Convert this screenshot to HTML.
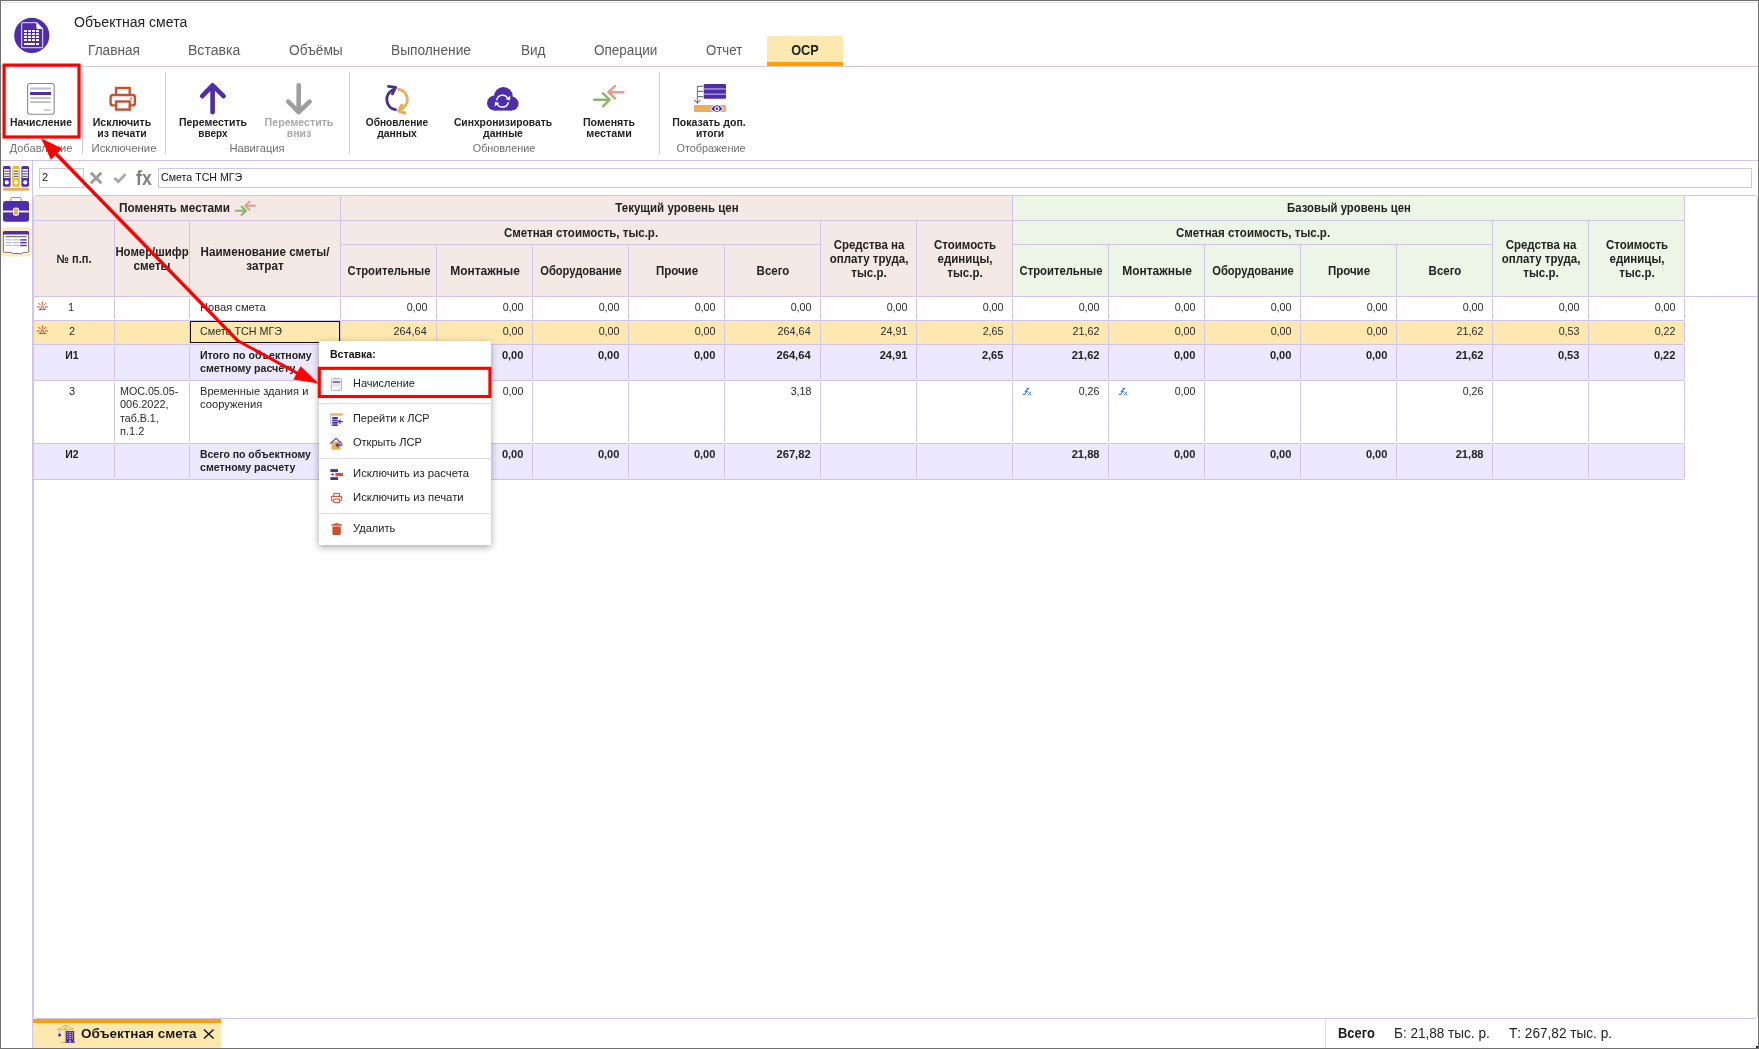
<!DOCTYPE html>
<html lang="ru"><head><meta charset="utf-8"><title>Объектная смета</title><style>
html,body{margin:0;padding:0}
body{width:1759px;height:1049px;overflow:hidden;background:#fff;position:relative;
font-family:"Liberation Sans",sans-serif}
.t{position:absolute;white-space:nowrap;display:block}
#wrap{position:absolute;left:0;top:0;width:1759px;height:1049px;will-change:transform;overflow:hidden}
svg{position:absolute;left:0;top:0}
</style></head><body><div id="wrap">
<svg width="1759" height="1049" shape-rendering="crispEdges">
<rect x="767" y="36" width="76" height="30" fill="#fde9b0"/>
<rect x="767" y="62" width="76" height="4" fill="#ffa000"/>
<rect x="1" y="66" width="1757" height="1" fill="#d0c4e9"/>
<rect x="1" y="160" width="1757" height="1" fill="#d0c4e9"/>
<rect x="82" y="72" width="1" height="82" fill="#d0c4e9"/>
<rect x="165" y="72" width="1" height="82" fill="#d0c4e9"/>
<rect x="349" y="72" width="1" height="82" fill="#d0c4e9"/>
<rect x="659" y="72" width="1" height="82" fill="#d0c4e9"/>
<rect x="32" y="161" width="1" height="887" fill="#d0c4e9"/>
<rect x="1" y="227.2" width="30.5" height="29.4" rx="3.5" fill="#fdecc0" shape-rendering="auto"/>
<rect x="39.5" y="168.5" width="44" height="19" fill="#fff" stroke="#d0c4e9"/>
<rect x="158.5" y="168.5" width="1593" height="19" fill="#fff" stroke="#d0c4e9"/>
<rect x="34" y="196" width="978" height="100" fill="#f5e9e6"/>
<rect x="1013" y="196" width="671" height="100" fill="#edf5e7"/>
<rect x="34" y="321" width="1650" height="23" fill="#fde9b0"/>
<rect x="34" y="345" width="1650" height="35" fill="#ece8fd"/>
<rect x="34" y="444" width="1650" height="35" fill="#ece8fd"/>
<rect x="33.5" y="195.5" width="1724" height="823" rx="3" fill="none" stroke="#d0c4e9" shape-rendering="auto"/>
<rect x="34" y="220" width="1651" height="1" fill="#d0c4e9"/>
<rect x="340" y="244" width="480" height="1" fill="#d0c4e9"/>
<rect x="1012" y="244" width="480" height="1" fill="#d0c4e9"/>
<rect x="34" y="296" width="1723" height="1" fill="#d0c4e9"/>
<rect x="34" y="320" width="1651" height="1" fill="#d0c4e9"/>
<rect x="34" y="344" width="1651" height="1" fill="#d0c4e9"/>
<rect x="34" y="380" width="1651" height="1" fill="#d0c4e9"/>
<rect x="34" y="443" width="1651" height="1" fill="#d0c4e9"/>
<rect x="34" y="479" width="1651" height="1" fill="#d0c4e9"/>
<rect x="114" y="221" width="1" height="75" fill="#d0c4e9"/>
<rect x="114" y="298" width="1" height="21" fill="#d0c4e9"/>
<rect x="114" y="322" width="1" height="21" fill="#d0c4e9"/>
<rect x="114" y="346" width="1" height="33" fill="#d0c4e9"/>
<rect x="114" y="382" width="1" height="60" fill="#d0c4e9"/>
<rect x="114" y="445" width="1" height="33" fill="#d0c4e9"/>
<rect x="189" y="221" width="1" height="75" fill="#d0c4e9"/>
<rect x="189" y="298" width="1" height="21" fill="#d0c4e9"/>
<rect x="189" y="322" width="1" height="21" fill="#d0c4e9"/>
<rect x="189" y="346" width="1" height="33" fill="#d0c4e9"/>
<rect x="189" y="382" width="1" height="60" fill="#d0c4e9"/>
<rect x="189" y="445" width="1" height="33" fill="#d0c4e9"/>
<rect x="340" y="196" width="1" height="100" fill="#d0c4e9"/>
<rect x="340" y="298" width="1" height="21" fill="#d0c4e9"/>
<rect x="340" y="322" width="1" height="21" fill="#d0c4e9"/>
<rect x="340" y="346" width="1" height="33" fill="#d0c4e9"/>
<rect x="340" y="382" width="1" height="60" fill="#d0c4e9"/>
<rect x="340" y="445" width="1" height="33" fill="#d0c4e9"/>
<rect x="436" y="245" width="1" height="51" fill="#d0c4e9"/>
<rect x="436" y="298" width="1" height="21" fill="#d0c4e9"/>
<rect x="436" y="322" width="1" height="21" fill="#d0c4e9"/>
<rect x="436" y="346" width="1" height="33" fill="#d0c4e9"/>
<rect x="436" y="382" width="1" height="60" fill="#d0c4e9"/>
<rect x="436" y="445" width="1" height="33" fill="#d0c4e9"/>
<rect x="532" y="245" width="1" height="51" fill="#d0c4e9"/>
<rect x="532" y="298" width="1" height="21" fill="#d0c4e9"/>
<rect x="532" y="322" width="1" height="21" fill="#d0c4e9"/>
<rect x="532" y="346" width="1" height="33" fill="#d0c4e9"/>
<rect x="532" y="382" width="1" height="60" fill="#d0c4e9"/>
<rect x="532" y="445" width="1" height="33" fill="#d0c4e9"/>
<rect x="628" y="245" width="1" height="51" fill="#d0c4e9"/>
<rect x="628" y="298" width="1" height="21" fill="#d0c4e9"/>
<rect x="628" y="322" width="1" height="21" fill="#d0c4e9"/>
<rect x="628" y="346" width="1" height="33" fill="#d0c4e9"/>
<rect x="628" y="382" width="1" height="60" fill="#d0c4e9"/>
<rect x="628" y="445" width="1" height="33" fill="#d0c4e9"/>
<rect x="724" y="245" width="1" height="51" fill="#d0c4e9"/>
<rect x="724" y="298" width="1" height="21" fill="#d0c4e9"/>
<rect x="724" y="322" width="1" height="21" fill="#d0c4e9"/>
<rect x="724" y="346" width="1" height="33" fill="#d0c4e9"/>
<rect x="724" y="382" width="1" height="60" fill="#d0c4e9"/>
<rect x="724" y="445" width="1" height="33" fill="#d0c4e9"/>
<rect x="820" y="221" width="1" height="75" fill="#d0c4e9"/>
<rect x="820" y="298" width="1" height="21" fill="#d0c4e9"/>
<rect x="820" y="322" width="1" height="21" fill="#d0c4e9"/>
<rect x="820" y="346" width="1" height="33" fill="#d0c4e9"/>
<rect x="820" y="382" width="1" height="60" fill="#d0c4e9"/>
<rect x="820" y="445" width="1" height="33" fill="#d0c4e9"/>
<rect x="916" y="221" width="1" height="75" fill="#d0c4e9"/>
<rect x="916" y="298" width="1" height="21" fill="#d0c4e9"/>
<rect x="916" y="322" width="1" height="21" fill="#d0c4e9"/>
<rect x="916" y="346" width="1" height="33" fill="#d0c4e9"/>
<rect x="916" y="382" width="1" height="60" fill="#d0c4e9"/>
<rect x="916" y="445" width="1" height="33" fill="#d0c4e9"/>
<rect x="1012" y="196" width="1" height="100" fill="#d0c4e9"/>
<rect x="1012" y="298" width="1" height="21" fill="#d0c4e9"/>
<rect x="1012" y="322" width="1" height="21" fill="#d0c4e9"/>
<rect x="1012" y="346" width="1" height="33" fill="#d0c4e9"/>
<rect x="1012" y="382" width="1" height="60" fill="#d0c4e9"/>
<rect x="1012" y="445" width="1" height="33" fill="#d0c4e9"/>
<rect x="1108" y="245" width="1" height="51" fill="#d0c4e9"/>
<rect x="1108" y="298" width="1" height="21" fill="#d0c4e9"/>
<rect x="1108" y="322" width="1" height="21" fill="#d0c4e9"/>
<rect x="1108" y="346" width="1" height="33" fill="#d0c4e9"/>
<rect x="1108" y="382" width="1" height="60" fill="#d0c4e9"/>
<rect x="1108" y="445" width="1" height="33" fill="#d0c4e9"/>
<rect x="1204" y="245" width="1" height="51" fill="#d0c4e9"/>
<rect x="1204" y="298" width="1" height="21" fill="#d0c4e9"/>
<rect x="1204" y="322" width="1" height="21" fill="#d0c4e9"/>
<rect x="1204" y="346" width="1" height="33" fill="#d0c4e9"/>
<rect x="1204" y="382" width="1" height="60" fill="#d0c4e9"/>
<rect x="1204" y="445" width="1" height="33" fill="#d0c4e9"/>
<rect x="1300" y="245" width="1" height="51" fill="#d0c4e9"/>
<rect x="1300" y="298" width="1" height="21" fill="#d0c4e9"/>
<rect x="1300" y="322" width="1" height="21" fill="#d0c4e9"/>
<rect x="1300" y="346" width="1" height="33" fill="#d0c4e9"/>
<rect x="1300" y="382" width="1" height="60" fill="#d0c4e9"/>
<rect x="1300" y="445" width="1" height="33" fill="#d0c4e9"/>
<rect x="1396" y="245" width="1" height="51" fill="#d0c4e9"/>
<rect x="1396" y="298" width="1" height="21" fill="#d0c4e9"/>
<rect x="1396" y="322" width="1" height="21" fill="#d0c4e9"/>
<rect x="1396" y="346" width="1" height="33" fill="#d0c4e9"/>
<rect x="1396" y="382" width="1" height="60" fill="#d0c4e9"/>
<rect x="1396" y="445" width="1" height="33" fill="#d0c4e9"/>
<rect x="1492" y="221" width="1" height="75" fill="#d0c4e9"/>
<rect x="1492" y="298" width="1" height="21" fill="#d0c4e9"/>
<rect x="1492" y="322" width="1" height="21" fill="#d0c4e9"/>
<rect x="1492" y="346" width="1" height="33" fill="#d0c4e9"/>
<rect x="1492" y="382" width="1" height="60" fill="#d0c4e9"/>
<rect x="1492" y="445" width="1" height="33" fill="#d0c4e9"/>
<rect x="1588" y="221" width="1" height="75" fill="#d0c4e9"/>
<rect x="1588" y="298" width="1" height="21" fill="#d0c4e9"/>
<rect x="1588" y="322" width="1" height="21" fill="#d0c4e9"/>
<rect x="1588" y="346" width="1" height="33" fill="#d0c4e9"/>
<rect x="1588" y="382" width="1" height="60" fill="#d0c4e9"/>
<rect x="1588" y="445" width="1" height="33" fill="#d0c4e9"/>
<rect x="1684" y="196" width="1" height="100" fill="#d0c4e9"/>
<rect x="1684" y="298" width="1" height="21" fill="#d0c4e9"/>
<rect x="1684" y="322" width="1" height="21" fill="#d0c4e9"/>
<rect x="1684" y="346" width="1" height="33" fill="#d0c4e9"/>
<rect x="1684" y="382" width="1" height="60" fill="#d0c4e9"/>
<rect x="1684" y="445" width="1" height="33" fill="#d0c4e9"/>
<rect x="33" y="1019" width="188" height="4" fill="#ffa000"/>
<rect x="33" y="1023" width="188" height="25" fill="#fde9b0"/>
<rect x="1325" y="1019" width="1" height="29" fill="#dddddd"/>
<rect x="2" y="2" width="1756" height="1" fill="#e3e5e3"/>
<rect x="1756" y="1046" width="2" height="2" fill="#1d2468"/>
<rect x="0" y="0" width="1759" height="1" fill="#707070"/>
<rect x="0" y="1048" width="1759" height="1" fill="#707070"/>
<rect x="0" y="0" width="1" height="1049" fill="#707070"/>
<rect x="1758" y="0" width="1" height="1049" fill="#707070"/>
</svg>
<svg width="1759" height="1049">
<circle cx="31.8" cy="35.4" r="17.6" fill="#4f2daa"/><path d="M23 22.6 H36.6 L42.6 28.8 V46.4 Q42.6 47.6 41.4 47.6 H23 Q21.6 47.6 21.6 46.4 V24 Q21.6 22.6 23 22.6 Z" fill="#4f2daa" stroke="#cbbdea" stroke-width="1.3"/><path d="M36.4 22.4 L43 29 H37.6 Q36.4 29 36.4 27.8 Z" fill="#fff"/><rect x="24" y="30" width="3" height="2" rx="0.5" fill="#fff"/><rect x="28" y="30" width="3" height="2" rx="0.5" fill="#fff"/><rect x="32" y="30" width="3" height="2" rx="0.5" fill="#fff"/><rect x="36" y="30" width="3" height="2" rx="0.5" fill="#fff"/><rect x="24" y="33" width="3" height="2" rx="0.5" fill="#fff"/><rect x="28" y="33" width="3" height="2" rx="0.5" fill="#fff"/><rect x="32" y="33" width="3" height="2" rx="0.5" fill="#fff"/><rect x="36" y="33" width="3" height="2" rx="0.5" fill="#fff"/><rect x="24" y="36" width="3" height="2" rx="0.5" fill="#fff"/><rect x="28" y="36" width="3" height="2" rx="0.5" fill="#fff"/><rect x="32" y="36" width="3" height="2" rx="0.5" fill="#fff"/><rect x="36" y="36" width="3" height="2" rx="0.5" fill="#fff"/><rect x="24" y="39" width="3" height="2" rx="0.5" fill="#fff"/><rect x="28" y="39" width="3" height="2" rx="0.5" fill="#fff"/><rect x="32" y="39" width="3" height="2" rx="0.5" fill="#fff"/><rect x="36" y="39" width="3" height="2" rx="0.5" fill="#fff"/><rect x="24" y="43" width="11" height="2" rx="0.5" fill="#fff"/><rect x="36" y="43" width="3" height="2" rx="0.5" fill="#fff"/>
<rect x="27.6" y="83.5" width="26.6" height="30.8" rx="2.2" fill="#fff" stroke="#8a8a8a" stroke-width="1.1"/><rect x="30" y="87.6" width="21" height="1.8" rx=".8" fill="#bdbdbd"/><rect x="30" y="92" width="21" height="3" rx=".6" fill="#4f2daa"/><rect x="30" y="97.2" width="21" height="1.8" rx=".8" fill="#bdbdbd"/><rect x="30" y="101.2" width="21" height="1.8" rx=".8" fill="#bdbdbd"/><rect x="44" y="109.3" width="7" height="1.5" rx=".7" fill="#bdbdbd"/>
<g transform="translate(109.5 86.9) scale(1.0)" fill="#fff" stroke="#cb4f2f" stroke-width="2.4"><rect x="6.6" y="1.1" width="13.6" height="7.5"/><rect x="1.1" y="8.1" width="24.3" height="10.4" rx="2.2"/><rect x="6.6" y="14.6" width="13.6" height="8.1"/><circle cx="21.6" cy="11.6" r="0.9" fill="#cb4f2f" stroke="none"/></g>
<path d="M212.6 112.2 V85.2 M202.2 96.2 L212.6 85.4 L223.6 96.2" fill="none" stroke="#4f2daa" stroke-width="4.6" stroke-linecap="round" stroke-linejoin="round"/><path d="M298.7 85.2 V112.2 M288.3 101.6 L298.7 112.2 L309.6 101.6" fill="none" stroke="#9e9e9e" stroke-width="4.6" stroke-linecap="round" stroke-linejoin="round"/>
<path d="M395.4 109.6 A10.4 10.4 0 0 1 393.6 89.6" fill="none" stroke="#43308f" stroke-width="2.9" stroke-linecap="round"/><path d="M388.6 86.4 L395.6 87.4 L392.4 93.8" fill="none" stroke="#43308f" stroke-width="2.9" stroke-linecap="round" stroke-linejoin="round"/><path d="M398.6 89.2 A10.4 10.4 0 0 1 400.6 109.2" fill="none" stroke="#e8ae5c" stroke-width="2.9" stroke-linecap="round"/><path d="M401.8 105 L398.6 111 L405 113" fill="none" stroke="#e8ae5c" stroke-width="2.9" stroke-linecap="round" stroke-linejoin="round"/>
<g fill="#4f2daa"><circle cx="503.4" cy="96.4" r="9.4"/><circle cx="494.6" cy="103" r="7.6"/><circle cx="511.6" cy="103.6" r="7"/><rect x="494.6" y="100" width="17" height="10.6"/></g><g fill="none" stroke="#fff" stroke-width="1.5" stroke-linecap="round"><path d="M496.8 99.7 A5.9 5.9 0 0 1 507.85 98.7"/><path d="M508.2 102.7 A5.9 5.9 0 0 1 497.15 103.7"/></g><path d="M510.3 95.8 L510 100.6 L505.6 99.3 Z" fill="#fff"/><path d="M494.7 106.6 L495 101.8 L499.4 103.1 Z" fill="#fff"/>
<g transform="translate(593 85.3) scale(1.0)" fill="none" stroke-width="2.5" stroke-linecap="round" stroke-linejoin="round"><path d="M1.2 14.4 H16.4 M10 8 L16.6 14.4 L10 21" stroke="#8ab570"/><path d="M30.4 6.9 H15.6 M22 0.8 L15.4 6.9 L22 13.2" stroke="#e59d8c"/></g>
<rect x="703.8" y="84" width="22.2" height="14.8" rx="1.2" fill="#4f2daa"/><rect x="703.8" y="88.4" width="22.2" height="1.1" fill="#c4b7ea"/><rect x="703.8" y="93.6" width="22.2" height="1.1" fill="#c4b7ea"/><rect x="694" y="105" width="32" height="6.9" rx="0.8" fill="#e8ae5c"/><path d="M703.4 86.4 H697.4 V103 M697.4 91.4 H703.4 M697.4 96.6 H703.4 M694.4 99.8 L697.4 103.2 L700.4 99.8" fill="none" stroke="#7a7a7a" stroke-width="1.1"/><path d="M709.8 108.7 Q716.9 100.2 724 108.7 Q716.9 117.2 709.8 108.7 Z" fill="#fff"/><path d="M711.2 108.7 Q716.9 102 722.6 108.7 Q716.9 115.4 711.2 108.7 Z" fill="#4f2daa"/><circle cx="716.9" cy="108.7" r="2.5" fill="#fff"/><circle cx="716.9" cy="108.7" r="1.3" fill="#4f2daa"/>
<rect x="3" y="166" width="7.6" height="20.8" rx="1.6" fill="#4f2daa"/><rect x="4.1" y="169" width="5.4" height="9" rx=".6" fill="#fff"/><rect x="4.4" y="170.6" width="4.8" height="1.3" fill="#666"/><rect x="4.4" y="173.2" width="4.8" height="1.3" fill="#666"/><rect x="4.4" y="175.8" width="4.8" height="1.3" fill="#666"/><circle cx="6.8" cy="182.4" r="2.1" fill="#fff"/><rect x="12.2" y="166" width="7.6" height="20.8" rx="1.6" fill="#e9be28"/><rect x="13.299999999999999" y="169" width="5.4" height="9" rx=".6" fill="#fff"/><rect x="13.6" y="170.6" width="4.8" height="1.3" fill="#666"/><rect x="13.6" y="173.2" width="4.8" height="1.3" fill="#666"/><rect x="13.6" y="175.8" width="4.8" height="1.3" fill="#666"/><circle cx="16.0" cy="182.4" r="2.1" fill="#fff"/><rect x="21.4" y="166" width="7.6" height="20.8" rx="1.6" fill="#4f2daa"/><rect x="22.5" y="169" width="5.4" height="9" rx=".6" fill="#fff"/><rect x="22.799999999999997" y="170.6" width="4.8" height="1.3" fill="#666"/><rect x="22.799999999999997" y="173.2" width="4.8" height="1.3" fill="#666"/><rect x="22.799999999999997" y="175.8" width="4.8" height="1.3" fill="#666"/><circle cx="25.2" cy="182.4" r="2.1" fill="#fff"/><rect x="3" y="187.8" width="26" height="3" rx=".6" fill="#e8ae5c"/><path d="M10.8 201 V198.6 Q10.8 197.6 11.8 197.6 H20.2 Q21.2 197.6 21.2 198.6 V201" fill="none" stroke="#8a8a8a" stroke-width="1"/><rect x="3" y="201" width="26" height="20.8" rx="2.4" fill="#4f2daa"/><rect x="3" y="210.6" width="26" height="1.8" fill="#fff"/><rect x="13.6" y="208.2" width="4.8" height="7" rx=".6" fill="#e8ae5c" stroke="#fff" stroke-width="1"/><path d="M3.4 232 H28.6 V251 Q28.6 252.4 27.2 252.4 H23 L22 253.6 H12.4 L11.4 252.4 H4.8 Q3.4 252.4 3.4 251 Z" fill="#fff" stroke="#777" stroke-width="1"/><path d="M4.6 231 H27.4 Q29 231 29 232.6 V234.6 H3 V232.6 Q3 231 4.6 231 Z" fill="#4f2daa"/><rect x="5.4" y="236" width="21.2" height="1.2" fill="#777"/><rect x="5.4" y="239.2" width="6.4" height="1.2" fill="#bbb"/><rect x="13" y="239.2" width="6" height="1.2" fill="#bbb"/><rect x="20.2" y="239.2" width="6.4" height="1.4" fill="#4f2daa"/><rect x="5.4" y="242" width="6.4" height="1.2" fill="#bbb"/><rect x="13" y="242" width="6" height="1.2" fill="#bbb"/><rect x="20.2" y="242" width="6.4" height="1.4" fill="#4f2daa"/><rect x="5.4" y="244.8" width="6.4" height="1.2" fill="#bbb"/><rect x="13" y="244.8" width="6" height="1.2" fill="#bbb"/><rect x="20.2" y="244.8" width="6.4" height="1.4" fill="#4f2daa"/>
<path d="M90.9 172.8 L101.3 183.2 M101.3 172.8 L90.9 183.2" fill="none" stroke="#9a9a9a" stroke-width="2.8"/><path d="M114.4 178 L118.4 181.6 L125.4 174.2" fill="none" stroke="#a6a6a6" stroke-width="2.7"/>
<g transform="translate(235 201.2) scale(0.66)" fill="none" stroke-width="3.0" stroke-linecap="round" stroke-linejoin="round"><path d="M1.2 14.4 H16.4 M10 8 L16.6 14.4 L10 21" stroke="#8ab570"/><path d="M30.4 6.9 H15.6 M22 0.8 L15.4 6.9 L22 13.2" stroke="#e59d8c"/></g>
<g fill="none" stroke="#d9452b" stroke-width="1" stroke-linecap="round"><path d="M39.199999999999996 309.6 H45.6 M40.199999999999996 309.20000000000005 L42.4 305.6 L44.6 309.20000000000005"/><path d="M42.4 304.40000000000003 V302.0"/><path d="M40.4 305.0 L38.8 303.20000000000005 M44.4 305.0 L46.0 303.20000000000005"/><path d="M39.4 307.0 H37.199999999999996 M45.4 307.0 H47.6"/></g>
<g fill="none" stroke="#d9452b" stroke-width="1" stroke-linecap="round"><path d="M39.199999999999996 333.6 H45.6 M40.199999999999996 333.20000000000005 L42.4 329.6 L44.6 333.20000000000005"/><path d="M42.4 328.40000000000003 V326.0"/><path d="M40.4 329.0 L38.8 327.20000000000005 M44.4 329.0 L46.0 327.20000000000005"/><path d="M39.4 331.0 H37.199999999999996 M45.4 331.0 H47.6"/></g>
<path d="M57.4 1029.4 H73.8 M57.6 1029.2 L66 1025.2 L73.6 1029.2 M61.6 1042.4 H66.4" fill="none" stroke="#e8b255" stroke-width="1"/><rect x="64.7" y="1025.4" width="1.6" height="17" fill="#e8b255"/><rect x="58.9" y="1030.6" width="1.3" height="3" fill="#b9a7e6"/><circle cx="59.6" cy="1035" r="1.5" fill="#4f2daa"/><rect x="66" y="1031" width="8.2" height="11.4" fill="#4f2daa"/><rect x="65.2" y="1041.8" width="9.8" height="0.9" fill="#4f2daa"/><rect x="67.2" y="1032.3" width="1" height=".9" fill="#e6c88c"/><rect x="69" y="1032.3" width="2.2" height=".9" fill="#cbb9e9"/><rect x="72" y="1032.3" width="1" height=".9" fill="#e6c88c"/><rect x="67.2" y="1034.2" width="1" height=".9" fill="#e6c88c"/><rect x="69" y="1034.2" width="2.2" height=".9" fill="#cbb9e9"/><rect x="72" y="1034.2" width="1" height=".9" fill="#e6c88c"/><rect x="67.2" y="1036.1" width="1" height=".9" fill="#e6c88c"/><rect x="69" y="1036.1" width="2.2" height=".9" fill="#cbb9e9"/><rect x="72" y="1036.1" width="1" height=".9" fill="#e6c88c"/><rect x="67.2" y="1038" width="1" height=".9" fill="#e6c88c"/><rect x="69" y="1038" width="2.2" height=".9" fill="#cbb9e9"/><rect x="72" y="1038" width="1" height=".9" fill="#e6c88c"/><rect x="69.2" y="1040.4" width="1.8" height="1.8" rx=".6" fill="#fdf3d6"/><path d="M204 1029.6 L213.6 1038.6 M213.6 1029.6 L204 1038.6" fill="none" stroke="#111" stroke-width="1.4"/>
<g transform="translate(0 0)" fill="none" stroke="#2f62f5" stroke-linecap="round"><path d="M1023.2 394.3 Q1025.3 394.9 1025.9 392.4 L1026.7 389.8 Q1027.3 387.7 1028.7 388.7" stroke-width="1.05"/><path d="M1025 391.3 H1027.8" stroke-width="0.9"/><path d="M1028.5 392.4 L1030.8 394.8 M1031 392.3 L1028.4 394.8" stroke-width="0.85"/></g>
<g transform="translate(96 0)" fill="none" stroke="#2f62f5" stroke-linecap="round"><path d="M1023.2 394.3 Q1025.3 394.9 1025.9 392.4 L1026.7 389.8 Q1027.3 387.7 1028.7 388.7" stroke-width="1.05"/><path d="M1025 391.3 H1027.8" stroke-width="0.9"/><path d="M1028.5 392.4 L1030.8 394.8 M1031 392.3 L1028.4 394.8" stroke-width="0.85"/></g>
</svg>
<span class="t" style="top:13.40px;font-size:14px;line-height:18px;color:#222;left:74.25px;transform-origin:0 0;transform:scaleX(1.0053);">Объектная смета</span>
<span class="t" style="top:41.05px;font-size:14px;line-height:18px;color:#5a5a5a;left:88.00px;transform-origin:0 0;transform:scaleX(0.9757);">Главная</span>
<span class="t" style="top:41.05px;font-size:14px;line-height:18px;color:#5a5a5a;left:188.25px;transform-origin:0 0;transform:scaleX(1.0039);">Вставка</span>
<span class="t" style="top:41.05px;font-size:14px;line-height:18px;color:#5a5a5a;left:288.75px;transform-origin:0 0;transform:scaleX(0.9831);">Объёмы</span>
<span class="t" style="top:41.05px;font-size:14px;line-height:18px;color:#5a5a5a;left:390.75px;transform-origin:0 0;transform:scaleX(0.9818);">Выполнение</span>
<span class="t" style="top:41.05px;font-size:14px;line-height:18px;color:#5a5a5a;left:520.50px;transform-origin:0 0;transform:scaleX(0.9673);">Вид</span>
<span class="t" style="top:41.05px;font-size:14px;line-height:18px;color:#5a5a5a;left:594.25px;transform-origin:0 0;transform:scaleX(0.9656);">Операции</span>
<span class="t" style="top:41.05px;font-size:14px;line-height:18px;color:#5a5a5a;left:706.25px;transform-origin:0 0;transform:scaleX(0.9454);">Отчет</span>
<span class="t" style="top:41.05px;font-size:14px;line-height:18px;color:#222;font-weight:700;left:805.00px;transform-origin:50% 0;transform:translateX(-50%) scaleX(0.9063);">ОСР</span>
<span class="t" style="top:115.19px;font-size:11px;line-height:15px;color:#222;font-weight:700;left:40.50px;transform-origin:50% 0;transform:translateX(-50%) scaleX(0.9459);">Начисление</span>
<span class="t" style="top:115.19px;font-size:11px;line-height:15px;color:#222;font-weight:700;left:122.25px;transform-origin:50% 0;transform:translateX(-50%) scaleX(0.9600);">Исключить</span>
<span class="t" style="top:126.19px;font-size:11px;line-height:15px;color:#222;font-weight:700;left:122.25px;transform-origin:50% 0;transform:translateX(-50%) scaleX(0.9440);">из печати</span>
<span class="t" style="top:115.19px;font-size:11px;line-height:15px;color:#222;font-weight:700;left:212.90px;transform-origin:50% 0;transform:translateX(-50%) scaleX(0.9572);">Переместить</span>
<span class="t" style="top:126.19px;font-size:11px;line-height:15px;color:#222;font-weight:700;left:213.10px;transform-origin:50% 0;transform:translateX(-50%) scaleX(0.9130);">вверх</span>
<span class="t" style="top:115.19px;font-size:11px;line-height:15px;color:#a9a9a9;font-weight:700;left:298.90px;transform-origin:50% 0;transform:translateX(-50%) scaleX(0.9656);">Переместить</span>
<span class="t" style="top:126.19px;font-size:11px;line-height:15px;color:#a9a9a9;font-weight:700;left:298.90px;transform-origin:50% 0;transform:translateX(-50%) scaleX(0.9516);">вниз</span>
<span class="t" style="top:115.19px;font-size:11px;line-height:15px;color:#222;font-weight:700;left:396.80px;transform-origin:50% 0;transform:translateX(-50%) scaleX(0.9200);">Обновление</span>
<span class="t" style="top:126.19px;font-size:11px;line-height:15px;color:#222;font-weight:700;left:396.70px;transform-origin:50% 0;transform:translateX(-50%) scaleX(0.9450);">данных</span>
<span class="t" style="top:115.19px;font-size:11px;line-height:15px;color:#222;font-weight:700;left:502.80px;transform-origin:50% 0;transform:translateX(-50%) scaleX(0.9364);">Синхронизировать</span>
<span class="t" style="top:126.19px;font-size:11px;line-height:15px;color:#222;font-weight:700;left:502.80px;transform-origin:50% 0;transform:translateX(-50%) scaleX(0.9521);">данные</span>
<span class="t" style="top:115.19px;font-size:11px;line-height:15px;color:#222;font-weight:700;left:609.00px;transform-origin:50% 0;transform:translateX(-50%) scaleX(0.9638);">Поменять</span>
<span class="t" style="top:126.19px;font-size:11px;line-height:15px;color:#222;font-weight:700;left:608.75px;transform-origin:50% 0;transform:translateX(-50%) scaleX(0.9755);">местами</span>
<span class="t" style="top:115.19px;font-size:11px;line-height:15px;color:#222;font-weight:700;left:709.25px;transform-origin:50% 0;transform:translateX(-50%) scaleX(0.9616);">Показать доп.</span>
<span class="t" style="top:126.19px;font-size:11px;line-height:15px;color:#222;font-weight:700;left:709.50px;transform-origin:50% 0;transform:translateX(-50%) scaleX(0.9342);">итоги</span>
<span class="t" style="top:140.76px;font-size:10.8px;line-height:15px;color:#707070;left:40.50px;transform-origin:50% 0;transform:translateX(-50%) scaleX(1.0299);">Добавление</span>
<span class="t" style="top:140.76px;font-size:10.8px;line-height:15px;color:#707070;left:123.50px;transform-origin:50% 0;transform:translateX(-50%) scaleX(1.0518);">Исключение</span>
<span class="t" style="top:140.76px;font-size:10.8px;line-height:15px;color:#707070;left:257.00px;transform-origin:50% 0;transform:translateX(-50%) scaleX(1.0348);">Навигация</span>
<span class="t" style="top:140.76px;font-size:10.8px;line-height:15px;color:#707070;left:503.75px;transform-origin:50% 0;transform:translateX(-50%) scaleX(1.0025);">Обновление</span>
<span class="t" style="top:140.76px;font-size:10.8px;line-height:15px;color:#707070;left:710.50px;transform-origin:50% 0;transform:translateX(-50%) scaleX(1.0050);">Отображение</span>
<span class="t" style="top:170.39px;font-size:11px;line-height:15px;color:#111;left:42.00px;transform-origin:0 0;transform:scaleX(0.9986);">2</span>
<span class="t" style="top:166.14px;font-size:19.5px;line-height:24px;color:#808080;font-weight:700;left:136.00px;transform-origin:0 0;transform:scaleX(0.9110);">fx</span>
<span class="t" style="top:170.39px;font-size:11px;line-height:15px;color:#111;left:161.25px;transform-origin:0 0;transform:scaleX(0.9667);">Смета ТСН МГЭ</span>
<span class="t" style="top:200.14px;font-size:12px;line-height:16px;color:#222;font-weight:700;left:119.30px;transform-origin:0 0;transform:scaleX(0.9818);">Поменять местами</span>
<span class="t" style="top:200.14px;font-size:12px;line-height:16px;color:#222;font-weight:700;left:677.00px;transform-origin:50% 0;transform:translateX(-50%) scaleX(0.9594);">Текущий уровень цен</span>
<span class="t" style="top:200.14px;font-size:12px;line-height:16px;color:#222;font-weight:700;left:1349.00px;transform-origin:50% 0;transform:translateX(-50%) scaleX(0.9442);">Базовый уровень цен</span>
<span class="t" style="top:225.14px;font-size:12px;line-height:16px;color:#222;font-weight:700;left:580.80px;transform-origin:50% 0;transform:translateX(-50%) scaleX(0.9603);">Сметная стоимость, тыс.р.</span>
<span class="t" style="top:225.14px;font-size:12px;line-height:16px;color:#222;font-weight:700;left:1252.80px;transform-origin:50% 0;transform:translateX(-50%) scaleX(0.9603);">Сметная стоимость, тыс.р.</span>
<span class="t" style="top:250.84px;font-size:12px;line-height:16px;color:#222;font-weight:700;left:74.40px;transform-origin:50% 0;transform:translateX(-50%) scaleX(0.9241);">№ п.п.</span>
<span class="t" style="top:244.04px;font-size:12px;line-height:16px;color:#222;font-weight:700;left:152.20px;transform-origin:50% 0;transform:translateX(-50%) scaleX(0.9474);">Номер/шифр</span>
<span class="t" style="top:257.84px;font-size:12px;line-height:16px;color:#222;font-weight:700;left:152.40px;transform-origin:50% 0;transform:translateX(-50%) scaleX(0.9737);">сметы</span>
<span class="t" style="top:244.04px;font-size:12px;line-height:16px;color:#222;font-weight:700;left:265.40px;transform-origin:50% 0;transform:translateX(-50%) scaleX(0.9691);">Наименование сметы/</span>
<span class="t" style="top:257.84px;font-size:12px;line-height:16px;color:#222;font-weight:700;left:265.30px;transform-origin:50% 0;transform:translateX(-50%) scaleX(0.9778);">затрат</span>
<span class="t" style="top:262.94px;font-size:12px;line-height:16px;color:#222;font-weight:700;left:389.00px;transform-origin:50% 0;transform:translateX(-50%) scaleX(0.9398);">Строительные</span>
<span class="t" style="top:262.94px;font-size:12px;line-height:16px;color:#222;font-weight:700;left:485.20px;transform-origin:50% 0;transform:translateX(-50%) scaleX(0.9970);">Монтажные</span>
<span class="t" style="top:262.94px;font-size:12px;line-height:16px;color:#222;font-weight:700;left:581.10px;transform-origin:50% 0;transform:translateX(-50%) scaleX(0.9297);">Оборудование</span>
<span class="t" style="top:262.94px;font-size:12px;line-height:16px;color:#222;font-weight:700;left:677.00px;transform-origin:50% 0;transform:translateX(-50%) scaleX(0.9582);">Прочие</span>
<span class="t" style="top:262.94px;font-size:12px;line-height:16px;color:#222;font-weight:700;left:773.00px;transform-origin:50% 0;transform:translateX(-50%) scaleX(0.9582);">Всего</span>
<span class="t" style="top:236.94px;font-size:12px;line-height:16px;color:#222;font-weight:700;left:868.80px;transform-origin:50% 0;transform:translateX(-50%) scaleX(0.9582);">Средства на</span>
<span class="t" style="top:251.04px;font-size:12px;line-height:16px;color:#222;font-weight:700;left:868.80px;transform-origin:50% 0;transform:translateX(-50%) scaleX(0.9582);">оплату труда,</span>
<span class="t" style="top:265.04px;font-size:12px;line-height:16px;color:#222;font-weight:700;left:868.80px;transform-origin:50% 0;transform:translateX(-50%) scaleX(0.9582);">тыс.р.</span>
<span class="t" style="top:236.94px;font-size:12px;line-height:16px;color:#222;font-weight:700;left:964.80px;transform-origin:50% 0;transform:translateX(-50%) scaleX(0.9582);">Стоимость</span>
<span class="t" style="top:251.04px;font-size:12px;line-height:16px;color:#222;font-weight:700;left:964.80px;transform-origin:50% 0;transform:translateX(-50%) scaleX(0.9582);">единицы,</span>
<span class="t" style="top:265.04px;font-size:12px;line-height:16px;color:#222;font-weight:700;left:964.80px;transform-origin:50% 0;transform:translateX(-50%) scaleX(0.9582);">тыс.р.</span>
<span class="t" style="top:262.94px;font-size:12px;line-height:16px;color:#222;font-weight:700;left:1061.00px;transform-origin:50% 0;transform:translateX(-50%) scaleX(0.9398);">Строительные</span>
<span class="t" style="top:262.94px;font-size:12px;line-height:16px;color:#222;font-weight:700;left:1157.20px;transform-origin:50% 0;transform:translateX(-50%) scaleX(0.9970);">Монтажные</span>
<span class="t" style="top:262.94px;font-size:12px;line-height:16px;color:#222;font-weight:700;left:1253.10px;transform-origin:50% 0;transform:translateX(-50%) scaleX(0.9297);">Оборудование</span>
<span class="t" style="top:262.94px;font-size:12px;line-height:16px;color:#222;font-weight:700;left:1349.00px;transform-origin:50% 0;transform:translateX(-50%) scaleX(0.9582);">Прочие</span>
<span class="t" style="top:262.94px;font-size:12px;line-height:16px;color:#222;font-weight:700;left:1445.00px;transform-origin:50% 0;transform:translateX(-50%) scaleX(0.9582);">Всего</span>
<span class="t" style="top:236.94px;font-size:12px;line-height:16px;color:#222;font-weight:700;left:1540.80px;transform-origin:50% 0;transform:translateX(-50%) scaleX(0.9582);">Средства на</span>
<span class="t" style="top:251.04px;font-size:12px;line-height:16px;color:#222;font-weight:700;left:1540.80px;transform-origin:50% 0;transform:translateX(-50%) scaleX(0.9582);">оплату труда,</span>
<span class="t" style="top:265.04px;font-size:12px;line-height:16px;color:#222;font-weight:700;left:1540.80px;transform-origin:50% 0;transform:translateX(-50%) scaleX(0.9582);">тыс.р.</span>
<span class="t" style="top:236.94px;font-size:12px;line-height:16px;color:#222;font-weight:700;left:1636.80px;transform-origin:50% 0;transform:translateX(-50%) scaleX(0.9582);">Стоимость</span>
<span class="t" style="top:251.04px;font-size:12px;line-height:16px;color:#222;font-weight:700;left:1636.80px;transform-origin:50% 0;transform:translateX(-50%) scaleX(0.9582);">единицы,</span>
<span class="t" style="top:265.04px;font-size:12px;line-height:16px;color:#222;font-weight:700;left:1636.80px;transform-origin:50% 0;transform:translateX(-50%) scaleX(0.9582);">тыс.р.</span>
<span class="t" style="top:299.99px;font-size:11px;line-height:15px;color:#2a2a2a;left:71.00px;transform-origin:50% 0;transform:translateX(-50%) scaleX(0.9986);">1</span>
<span class="t" style="top:299.99px;font-size:11px;line-height:15px;color:#2a2a2a;left:200.00px;transform-origin:0 0;transform:scaleX(1.0129);">Новая смета</span>
<span class="t" style="top:299.99px;font-size:11px;line-height:15px;color:#2a2a2a;right:1331.90px;transform-origin:100% 0;transform:scaleX(0.9683);">0,00</span>
<span class="t" style="top:299.99px;font-size:11px;line-height:15px;color:#2a2a2a;right:1235.90px;transform-origin:100% 0;transform:scaleX(0.9683);">0,00</span>
<span class="t" style="top:299.99px;font-size:11px;line-height:15px;color:#2a2a2a;right:1139.90px;transform-origin:100% 0;transform:scaleX(0.9683);">0,00</span>
<span class="t" style="top:299.99px;font-size:11px;line-height:15px;color:#2a2a2a;right:1043.90px;transform-origin:100% 0;transform:scaleX(0.9683);">0,00</span>
<span class="t" style="top:299.99px;font-size:11px;line-height:15px;color:#2a2a2a;right:947.90px;transform-origin:100% 0;transform:scaleX(0.9683);">0,00</span>
<span class="t" style="top:299.99px;font-size:11px;line-height:15px;color:#2a2a2a;right:851.90px;transform-origin:100% 0;transform:scaleX(0.9683);">0,00</span>
<span class="t" style="top:299.99px;font-size:11px;line-height:15px;color:#2a2a2a;right:755.90px;transform-origin:100% 0;transform:scaleX(0.9683);">0,00</span>
<span class="t" style="top:299.99px;font-size:11px;line-height:15px;color:#2a2a2a;right:659.90px;transform-origin:100% 0;transform:scaleX(0.9683);">0,00</span>
<span class="t" style="top:299.99px;font-size:11px;line-height:15px;color:#2a2a2a;right:563.90px;transform-origin:100% 0;transform:scaleX(0.9683);">0,00</span>
<span class="t" style="top:299.99px;font-size:11px;line-height:15px;color:#2a2a2a;right:467.90px;transform-origin:100% 0;transform:scaleX(0.9683);">0,00</span>
<span class="t" style="top:299.99px;font-size:11px;line-height:15px;color:#2a2a2a;right:371.90px;transform-origin:100% 0;transform:scaleX(0.9683);">0,00</span>
<span class="t" style="top:299.99px;font-size:11px;line-height:15px;color:#2a2a2a;right:275.90px;transform-origin:100% 0;transform:scaleX(0.9683);">0,00</span>
<span class="t" style="top:299.99px;font-size:11px;line-height:15px;color:#2a2a2a;right:179.90px;transform-origin:100% 0;transform:scaleX(0.9683);">0,00</span>
<span class="t" style="top:299.99px;font-size:11px;line-height:15px;color:#2a2a2a;right:83.90px;transform-origin:100% 0;transform:scaleX(0.9683);">0,00</span>
<span class="t" style="top:323.99px;font-size:11px;line-height:15px;color:#2a2a2a;left:72.10px;transform-origin:50% 0;transform:translateX(-50%) scaleX(0.9986);">2</span>
<span class="t" style="top:323.99px;font-size:11px;line-height:15px;color:#2a2a2a;left:200.00px;transform-origin:0 0;transform:scaleX(0.9756);">Смета ТСН МГЭ</span>
<span class="t" style="top:323.99px;font-size:11px;line-height:15px;color:#2a2a2a;right:1331.90px;transform-origin:100% 0;transform:scaleX(0.9834);">264,64</span>
<span class="t" style="top:323.99px;font-size:11px;line-height:15px;color:#2a2a2a;right:1235.90px;transform-origin:100% 0;transform:scaleX(0.9683);">0,00</span>
<span class="t" style="top:323.99px;font-size:11px;line-height:15px;color:#2a2a2a;right:1139.90px;transform-origin:100% 0;transform:scaleX(0.9683);">0,00</span>
<span class="t" style="top:323.99px;font-size:11px;line-height:15px;color:#2a2a2a;right:1043.90px;transform-origin:100% 0;transform:scaleX(0.9683);">0,00</span>
<span class="t" style="top:323.99px;font-size:11px;line-height:15px;color:#2a2a2a;right:947.90px;transform-origin:100% 0;transform:scaleX(0.9834);">264,64</span>
<span class="t" style="top:323.99px;font-size:11px;line-height:15px;color:#2a2a2a;right:851.90px;transform-origin:100% 0;transform:scaleX(0.9775);">24,91</span>
<span class="t" style="top:323.99px;font-size:11px;line-height:15px;color:#2a2a2a;right:755.90px;transform-origin:100% 0;transform:scaleX(0.9683);">2,65</span>
<span class="t" style="top:323.99px;font-size:11px;line-height:15px;color:#2a2a2a;right:659.90px;transform-origin:100% 0;transform:scaleX(0.9775);">21,62</span>
<span class="t" style="top:323.99px;font-size:11px;line-height:15px;color:#2a2a2a;right:563.90px;transform-origin:100% 0;transform:scaleX(0.9683);">0,00</span>
<span class="t" style="top:323.99px;font-size:11px;line-height:15px;color:#2a2a2a;right:467.90px;transform-origin:100% 0;transform:scaleX(0.9683);">0,00</span>
<span class="t" style="top:323.99px;font-size:11px;line-height:15px;color:#2a2a2a;right:371.90px;transform-origin:100% 0;transform:scaleX(0.9683);">0,00</span>
<span class="t" style="top:323.99px;font-size:11px;line-height:15px;color:#2a2a2a;right:275.90px;transform-origin:100% 0;transform:scaleX(0.9775);">21,62</span>
<span class="t" style="top:323.99px;font-size:11px;line-height:15px;color:#2a2a2a;right:179.90px;transform-origin:100% 0;transform:scaleX(0.9683);">0,53</span>
<span class="t" style="top:323.99px;font-size:11px;line-height:15px;color:#2a2a2a;right:83.90px;transform-origin:100% 0;transform:scaleX(0.9683);">0,22</span>
<span class="t" style="top:347.79px;font-size:11px;line-height:15px;color:#222;font-weight:700;left:72.00px;transform-origin:50% 0;transform:translateX(-50%) scaleX(0.9514);">И1</span>
<span class="t" style="top:347.79px;font-size:11px;line-height:15px;color:#222;font-weight:700;left:200.00px;transform-origin:0 0;transform:scaleX(0.9601);">Итого по объектному</span>
<span class="t" style="top:361.19px;font-size:11px;line-height:15px;color:#222;font-weight:700;left:200.00px;transform-origin:0 0;transform:scaleX(0.9655);">сметному расчету</span>
<span class="t" style="top:347.79px;font-size:11px;line-height:15px;color:#222;font-weight:700;right:1331.90px;transform-origin:100% 0;transform:scaleX(1.0160);">264,64</span>
<span class="t" style="top:347.79px;font-size:11px;line-height:15px;color:#222;font-weight:700;right:1235.90px;transform-origin:100% 0;transform:scaleX(1.0056);">0,00</span>
<span class="t" style="top:347.79px;font-size:11px;line-height:15px;color:#222;font-weight:700;right:1139.90px;transform-origin:100% 0;transform:scaleX(1.0056);">0,00</span>
<span class="t" style="top:347.79px;font-size:11px;line-height:15px;color:#222;font-weight:700;right:1043.90px;transform-origin:100% 0;transform:scaleX(1.0056);">0,00</span>
<span class="t" style="top:347.79px;font-size:11px;line-height:15px;color:#222;font-weight:700;right:947.90px;transform-origin:100% 0;transform:scaleX(1.0160);">264,64</span>
<span class="t" style="top:347.79px;font-size:11px;line-height:15px;color:#222;font-weight:700;right:851.90px;transform-origin:100% 0;transform:scaleX(1.0120);">24,91</span>
<span class="t" style="top:347.79px;font-size:11px;line-height:15px;color:#222;font-weight:700;right:755.90px;transform-origin:100% 0;transform:scaleX(1.0056);">2,65</span>
<span class="t" style="top:347.79px;font-size:11px;line-height:15px;color:#222;font-weight:700;right:659.90px;transform-origin:100% 0;transform:scaleX(1.0120);">21,62</span>
<span class="t" style="top:347.79px;font-size:11px;line-height:15px;color:#222;font-weight:700;right:563.90px;transform-origin:100% 0;transform:scaleX(1.0056);">0,00</span>
<span class="t" style="top:347.79px;font-size:11px;line-height:15px;color:#222;font-weight:700;right:467.90px;transform-origin:100% 0;transform:scaleX(1.0056);">0,00</span>
<span class="t" style="top:347.79px;font-size:11px;line-height:15px;color:#222;font-weight:700;right:371.90px;transform-origin:100% 0;transform:scaleX(1.0056);">0,00</span>
<span class="t" style="top:347.79px;font-size:11px;line-height:15px;color:#222;font-weight:700;right:275.90px;transform-origin:100% 0;transform:scaleX(1.0120);">21,62</span>
<span class="t" style="top:347.79px;font-size:11px;line-height:15px;color:#222;font-weight:700;right:179.90px;transform-origin:100% 0;transform:scaleX(1.0056);">0,53</span>
<span class="t" style="top:347.79px;font-size:11px;line-height:15px;color:#222;font-weight:700;right:83.90px;transform-origin:100% 0;transform:scaleX(1.0056);">0,22</span>
<span class="t" style="top:384.09px;font-size:11px;line-height:15px;color:#2a2a2a;left:72.00px;transform-origin:50% 0;transform:translateX(-50%) scaleX(0.9986);">3</span>
<span class="t" style="top:384.09px;font-size:11px;line-height:15px;color:#2a2a2a;left:120.00px;transform-origin:0 0;transform:scaleX(0.9713);">МОС.05.05-</span>
<span class="t" style="top:397.39px;font-size:11px;line-height:15px;color:#2a2a2a;left:120.00px;transform-origin:0 0;transform:scaleX(0.9931);">006.2022,</span>
<span class="t" style="top:410.79px;font-size:11px;line-height:15px;color:#2a2a2a;left:120.00px;transform-origin:0 0;transform:scaleX(0.9658);">таб.В.1,</span>
<span class="t" style="top:424.09px;font-size:11px;line-height:15px;color:#2a2a2a;left:120.00px;transform-origin:0 0;transform:scaleX(1.0036);">п.1.2</span>
<span class="t" style="top:384.09px;font-size:11px;line-height:15px;color:#2a2a2a;left:200.00px;transform-origin:0 0;transform:scaleX(1.0112);">Временные здания и</span>
<span class="t" style="top:397.39px;font-size:11px;line-height:15px;color:#2a2a2a;left:200.00px;transform-origin:0 0;transform:scaleX(1.0173);">сооружения</span>
<span class="t" style="top:384.09px;font-size:11px;line-height:15px;color:#2a2a2a;right:1331.90px;transform-origin:100% 0;transform:scaleX(0.9683);">3,18</span>
<span class="t" style="top:384.09px;font-size:11px;line-height:15px;color:#2a2a2a;right:1235.90px;transform-origin:100% 0;transform:scaleX(0.9683);">0,00</span>
<span class="t" style="top:384.09px;font-size:11px;line-height:15px;color:#2a2a2a;right:947.90px;transform-origin:100% 0;transform:scaleX(0.9683);">3,18</span>
<span class="t" style="top:384.09px;font-size:11px;line-height:15px;color:#2a2a2a;right:659.90px;transform-origin:100% 0;transform:scaleX(0.9683);">0,26</span>
<span class="t" style="top:384.09px;font-size:11px;line-height:15px;color:#2a2a2a;right:563.90px;transform-origin:100% 0;transform:scaleX(0.9683);">0,00</span>
<span class="t" style="top:384.09px;font-size:11px;line-height:15px;color:#2a2a2a;right:275.90px;transform-origin:100% 0;transform:scaleX(0.9683);">0,26</span>
<span class="t" style="top:446.59px;font-size:11px;line-height:15px;color:#222;font-weight:700;left:72.20px;transform-origin:50% 0;transform:translateX(-50%) scaleX(0.9514);">И2</span>
<span class="t" style="top:446.59px;font-size:11px;line-height:15px;color:#222;font-weight:700;left:200.00px;transform-origin:0 0;transform:scaleX(0.9507);">Всего по объектному</span>
<span class="t" style="top:459.79px;font-size:11px;line-height:15px;color:#222;font-weight:700;left:200.00px;transform-origin:0 0;transform:scaleX(0.9655);">сметному расчету</span>
<span class="t" style="top:446.59px;font-size:11px;line-height:15px;color:#222;font-weight:700;right:1331.90px;transform-origin:100% 0;transform:scaleX(1.0160);">267,82</span>
<span class="t" style="top:446.59px;font-size:11px;line-height:15px;color:#222;font-weight:700;right:1235.90px;transform-origin:100% 0;transform:scaleX(1.0056);">0,00</span>
<span class="t" style="top:446.59px;font-size:11px;line-height:15px;color:#222;font-weight:700;right:1139.90px;transform-origin:100% 0;transform:scaleX(1.0056);">0,00</span>
<span class="t" style="top:446.59px;font-size:11px;line-height:15px;color:#222;font-weight:700;right:1043.90px;transform-origin:100% 0;transform:scaleX(1.0056);">0,00</span>
<span class="t" style="top:446.59px;font-size:11px;line-height:15px;color:#222;font-weight:700;right:947.90px;transform-origin:100% 0;transform:scaleX(1.0160);">267,82</span>
<span class="t" style="top:446.59px;font-size:11px;line-height:15px;color:#222;font-weight:700;right:659.90px;transform-origin:100% 0;transform:scaleX(1.0120);">21,88</span>
<span class="t" style="top:446.59px;font-size:11px;line-height:15px;color:#222;font-weight:700;right:563.90px;transform-origin:100% 0;transform:scaleX(1.0056);">0,00</span>
<span class="t" style="top:446.59px;font-size:11px;line-height:15px;color:#222;font-weight:700;right:467.90px;transform-origin:100% 0;transform:scaleX(1.0056);">0,00</span>
<span class="t" style="top:446.59px;font-size:11px;line-height:15px;color:#222;font-weight:700;right:371.90px;transform-origin:100% 0;transform:scaleX(1.0056);">0,00</span>
<span class="t" style="top:446.59px;font-size:11px;line-height:15px;color:#222;font-weight:700;right:275.90px;transform-origin:100% 0;transform:scaleX(1.0120);">21,88</span>
<span class="t" style="top:1025.13px;font-size:13.2px;line-height:17px;color:#1a1a1a;font-weight:700;left:81.40px;transform-origin:0 0;transform:scaleX(1.0236);">Объектная смета</span>
<span class="t" style="top:1023.65px;font-size:14px;line-height:18px;color:#1a1a1a;font-weight:700;left:1338.40px;transform-origin:0 0;transform:scaleX(0.9225);">Всего</span>
<span class="t" style="top:1024.05px;font-size:14px;line-height:18px;color:#222;left:1394.00px;transform-origin:0 0;transform:scaleX(0.9683);">Б: 21,88 тыс. р.</span>
<span class="t" style="top:1024.05px;font-size:14px;line-height:18px;color:#222;left:1508.80px;transform-origin:0 0;transform:scaleX(0.9718);">Т: 267,82 тыс. р.</span>
<div style="position:absolute;left:190px;top:321px;width:148.2px;height:19.8px;border:1.6px solid #111"></div>
<div style="position:absolute;left:319px;top:341px;width:172px;height:204px;background:#fff;box-shadow:0 2px 7px rgba(0,0,0,.36)"><div style="position:absolute;left:0;top:62px;width:172px;height:1px;background:#dedede"></div><div style="position:absolute;left:0;top:117px;width:172px;height:1px;background:#dedede"></div><div style="position:absolute;left:0;top:172px;width:172px;height:1px;background:#dedede"></div></div>
<svg width="1759" height="1049"><rect x="331.5" y="378.5" width="10" height="12" rx=".8" fill="#fff" stroke="#b5b5b5" stroke-width="1"/><rect x="332.6" y="381.4" width="7.8" height="1.3" fill="#4f2daa"/><rect x="332.6" y="379.6" width="7.8" height="1" fill="#d0d0d0"/><rect x="332.6" y="383.6" width="7.8" height="1" fill="#d0d0d0"/><rect x="332.6" y="385.4" width="7.8" height="1" fill="#d0d0d0"/><rect x="338" y="388.4" width="2.6" height=".9" fill="#c4c4c4"/><rect x="330.2" y="413.4" width="12.6" height="2.2" fill="#e8ae5c"/><path d="M330.8 415.6 V424.4 L332.2 425.4" fill="none" stroke="#b9a9e4" stroke-width="1"/><rect x="332.2" y="417" width="5.6" height="1.9" rx=".5" fill="#4f2daa"/><rect x="332.2" y="419.4" width="5.6" height="1.9" rx=".5" fill="#4f2daa"/><rect x="332.2" y="421.8" width="5.6" height="1.9" rx=".5" fill="#4f2daa"/><rect x="332.2" y="424.2" width="5.6" height="1.9" rx=".5" fill="#4f2daa"/><path d="M342.8 421.6 H338.6 M340.6 419.6 L338.4 421.6 L340.6 423.6" fill="none" stroke="#4f2daa" stroke-width="1.1"/><rect x="331.6" y="441.6" width="9" height="7.4" fill="#e8ae5c"/><rect x="331" y="449" width="10.2" height="1" fill="#cfcfcf"/><path d="M330.2 443.6 L336.1 438.4 L342 443.6" fill="none" stroke="#4f2daa" stroke-width="1.1"/><path d="M342.6 445.2 H336.4 M338.4 443.2 L336.2 445.2 L338.4 447.2" fill="none" stroke="#4f2daa" stroke-width="1.2"/><rect x="330.4" y="469.1" width="7.6" height="2.9" fill="#4f2daa"/><rect x="330.4" y="477.1" width="7.6" height="2.9" fill="#4f2daa"/><rect x="335.4" y="472.9" width="7.6" height="3.3" fill="#d9503a"/><path d="M330.8 474.5 H333.6 M332.4 473.2 L333.8 474.5 L332.4 475.8" fill="none" stroke="#4f2daa" stroke-width=".9"/><g transform="translate(331 493) scale(0.42)" fill="#fff" stroke="#d9573d" stroke-width="2.6"><rect x="6.6" y="1.1" width="13.6" height="7.5"/><rect x="1.1" y="8.1" width="24.3" height="10.4" rx="2.2"/><rect x="6.6" y="14.6" width="13.6" height="8.1"/><circle cx="21.6" cy="11.6" r="0.9" fill="#d9573d" stroke="none"/></g><path d="M332.4 526.4 H340.8 V533.4 Q340.8 535 339.2 535 H334 Q332.4 535 332.4 533.4 Z" fill="#cb4f2f"/><rect x="331.3" y="524.2" width="10.6" height="1.5" rx=".5" fill="#cb4f2f"/><rect x="334.4" y="523.2" width="4.4" height="1.4" rx=".5" fill="#cb4f2f"/></svg>
<span class="t" style="top:347.09px;font-size:11px;line-height:15px;color:#111;font-weight:700;left:330.00px;transform-origin:0 0;transform:scaleX(0.9596);z-index:5;">Вставка:</span>
<span class="t" style="top:375.99px;font-size:11px;line-height:15px;color:#222;left:353.30px;transform-origin:0 0;transform:scaleX(0.9971);z-index:5;">Начисление</span>
<span class="t" style="top:410.99px;font-size:11px;line-height:15px;color:#222;left:353.30px;transform-origin:0 0;transform:scaleX(0.9946);z-index:5;">Перейти к ЛСР</span>
<span class="t" style="top:434.89px;font-size:11px;line-height:15px;color:#222;left:353.30px;transform-origin:0 0;transform:scaleX(1.0020);z-index:5;">Открыть ЛСР</span>
<span class="t" style="top:465.79px;font-size:11px;line-height:15px;color:#222;left:353.30px;transform-origin:0 0;transform:scaleX(1.0280);z-index:5;">Исключить из расчета</span>
<span class="t" style="top:489.89px;font-size:11px;line-height:15px;color:#222;left:353.30px;transform-origin:0 0;transform:scaleX(1.0325);z-index:5;">Исключить из печати</span>
<span class="t" style="top:520.99px;font-size:11px;line-height:15px;color:#222;left:353.30px;transform-origin:0 0;transform:scaleX(1.0071);z-index:5;">Удалить</span>
<svg width="1759" height="1049"><rect x="4.1" y="65.1" width="74.9" height="71.9" fill="none" stroke="#ff0000" stroke-width="3.2"/><rect x="319.3" y="368.3" width="170.6" height="28.2" fill="none" stroke="#ff0000" stroke-width="3.1"/><path d="M56.4 154.2 L237.4 340.4" fill="none" stroke="#ff0000" stroke-width="3.4" stroke-linecap="round"/><path d="M237.4 340.4 L297 373" fill="none" stroke="#ff0000" stroke-width="2.9" stroke-linecap="round"/><path d="M41.1 138.3 L50.9 159.7 L62 148.6 Z" fill="#ff0000"/><path d="M318.6 383.5 L300.6 366.3 L293.3 379.6 Z" fill="#ff0000"/></svg>
</div></body></html>
